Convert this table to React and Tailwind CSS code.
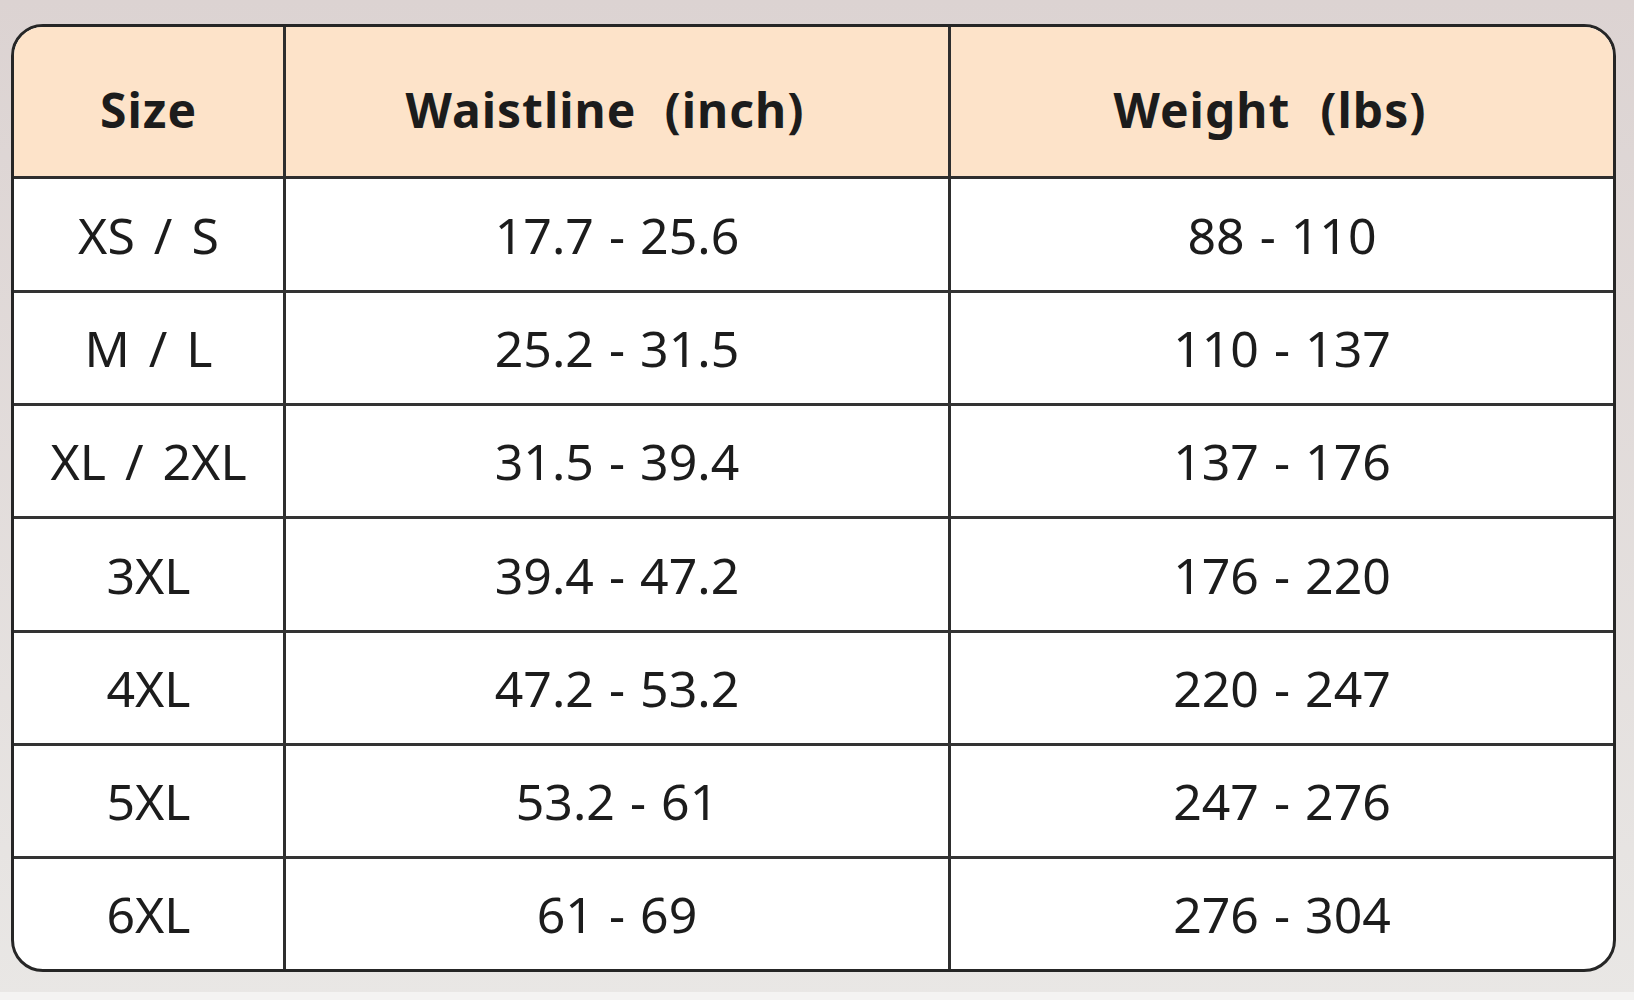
import React from "react";

const rows = [
  ["XS / S", "17.7 - 25.6", "88 - 110", "h-[114px]"],
  ["M / L", "25.2 - 31.5", "110 - 137", "h-[113px]"],
  ["XL / 2XL", "31.5 - 39.4", "137 - 176", "h-[113px]"],
  ["3XL", "39.4 - 47.2", "176 - 220", "h-[114px]"],
  ["4XL", "47.2 - 53.2", "220 - 247", "h-[113px]"],
  ["5XL", "53.2 - 61", "247 - 276", "h-[113px]"],
  ["6XL", "61 - 69", "276 - 304", "flex-1"],
];

export default function App() {
  return (
    <div
      className="w-[1634px] h-[1000px] flex flex-col bg-gradient-to-b from-[#dcd3d2] to-[#e9e7e5]"
      style={{ fontFamily: '"Noto Sans", "Open Sans", sans-serif' }}
    >
      <div className="pt-[24px] pl-[11px]">
        <div className="w-[1605px] h-[948px] border-[3px] border-[#262626] rounded-[32px] overflow-hidden flex flex-col bg-white text-[#1c1c1c]">
          <div className="h-[152px] flex bg-[#fde3c9] border-b-[3px] border-[#2e2e2e] font-bold text-[48px] tracking-[1px]">
            <div className="w-[272px] border-r-[3px] border-[#2e2e2e] flex items-center justify-center pt-[16px]">
              Size
            </div>
            <div className="w-[665px] border-r-[3px] border-[#2e2e2e] flex items-center justify-center pt-[16px]">
              <span>Waistline</span>
              <span className="ml-[28px]">(inch)</span>
              <span className="w-[24px]"></span>
            </div>
            <div className="flex-1 flex items-center justify-center pt-[16px]">
              <span>Weight</span>
              <span className="ml-[30px]">(lbs)</span>
              <span className="w-[24px]"></span>
            </div>
          </div>
          {rows.map((r, i) => (
            <div
              key={i}
              className={
                i < rows.length - 1
                  ? `${r[3]} flex border-b-[3px] border-[#333333] text-[50px] leading-none`
                  : "flex-1 flex text-[50px] leading-none"
              }
            >
              <div className="w-[272px] border-r-[3px] border-[#2e2e2e] flex items-center justify-center [word-spacing:6px]">
                {r[0]}
              </div>
              <div className="w-[665px] border-r-[3px] border-[#2e2e2e] flex items-center justify-center [word-spacing:2px]">
                {r[1]}
              </div>
              <div className="flex-1 flex items-center justify-center [word-spacing:2px]">
                {r[2]}
              </div>
            </div>
          ))}
        </div>
      </div>
      <div className="flex-1"></div>
      <div className="h-[8px] bg-[#f4f3f2]"></div>
    </div>
  );
}
